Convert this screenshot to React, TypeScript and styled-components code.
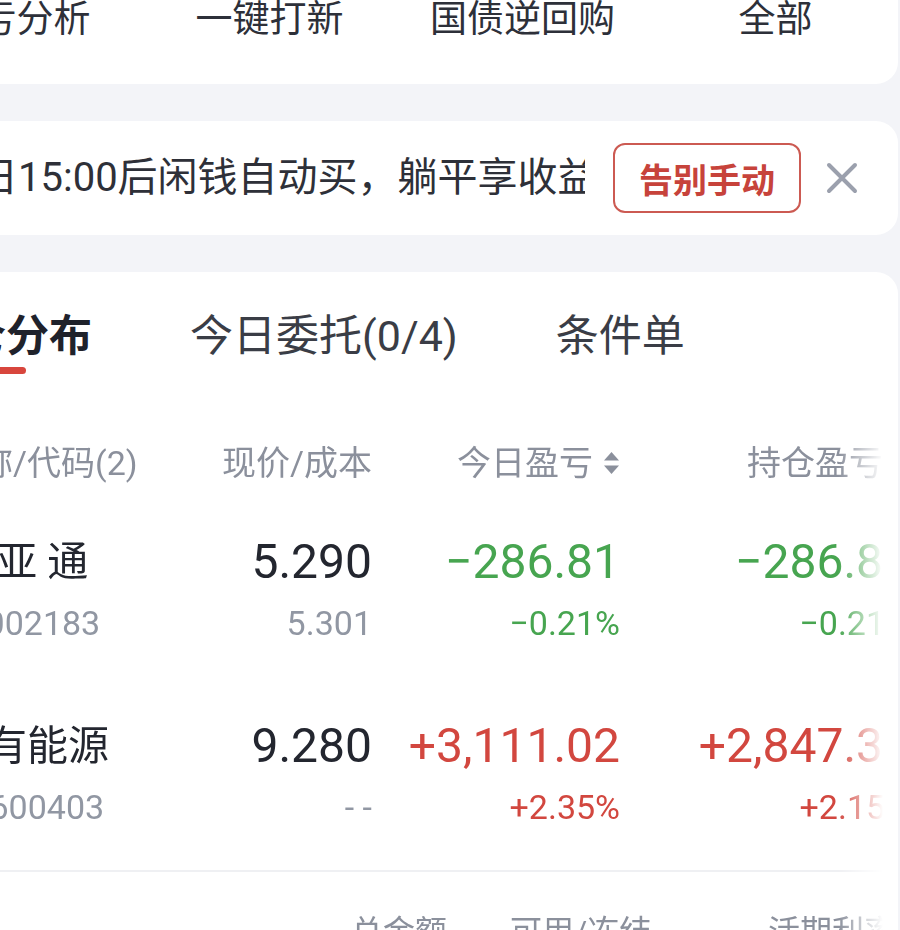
import React from 'react'
import styled, { createGlobalStyle } from 'styled-components'

const GREEN = '#47a550'
const RED = '#d2473f'
const TEXT = '#23262f'
const GREY = '#8b909c'

interface Holding {
  name: string
  code: string
  price: string
  cost: string
  today: string
  todayPct: string
  total: string
  totalPct: string
  up: boolean
}

const holdings: Holding[] = [
  {
    name: '怡 亚 通',
    code: 'SZ002183',
    price: '5.290',
    cost: '5.301',
    today: '−286.81',
    todayPct: '−0.21%',
    total: '−286.81',
    totalPct: '−0.21%',
    up: false,
  },
  {
    name: '大有能源',
    code: 'SH600403',
    price: '9.280',
    cost: '- -',
    today: '+3,111.02',
    todayPct: '+2.35%',
    total: '+2,847.36',
    totalPct: '+2.15%',
    up: true,
  },
]

const navItems = ['盈亏分析', '一键打新', '国债逆回购', '全部']
const tabs = ['持仓分布', '今日委托(0/4)', '条件单']

const GlobalStyle = createGlobalStyle`
  html, body {
    margin: 0;
    padding: 0;
    background: #f3f4f8;
    overflow: hidden;
  }
  body {
    font-family: Roboto, "Noto Sans CJK SC", sans-serif;
    color: ${TEXT};
  }
`

const SortIcon: React.FC = () => (
  <svg width='17' height='24' viewBox='0 0 17 24'>
    <path d='M8.5 1 L16 9.5 H1 Z' fill={GREY} />
    <path d='M8.5 23 L16 14.5 H1 Z' fill={GREY} />
  </svg>
)

const CloseIcon: React.FC = () => (
  <svg width='32' height='32' viewBox='0 0 32 32'>
    <path
      d='M3 3 L29 29 M29 3 L3 29'
      stroke='#9ba0ad'
      strokeWidth='4'
      strokeLinecap='round'
    />
  </svg>
)

const App: React.FC = () => {
  return (
    <>
      <GlobalStyle />
      <StyledPage>
        <StyledNavCard>
          {navItems.map((item) => (
            <StyledNavItem key={item}>{item}</StyledNavItem>
          ))}
        </StyledNavCard>

        <StyledBanner>
          <StyledBannerText>每日15:00后闲钱自动买，躺平享收益</StyledBannerText>
          <StyledBannerButton>告别手动</StyledBannerButton>
          <StyledClose>
            <CloseIcon />
          </StyledClose>
        </StyledBanner>

        <StyledHoldingCard>
          <StyledTabs>
            {tabs.map((tab, i) => (
              <StyledTab key={tab} isActive={i === 0}>
                {tab}
                {i === 0 && <StyledTabBar />}
              </StyledTab>
            ))}
          </StyledTabs>

          <StyledTableArea>
            <StyledTable>
              <StyledHeaderRow>
                <StyledHeaderCell align='left'>名称/代码(2)</StyledHeaderCell>
                <StyledHeaderCell align='right'>现价/成本</StyledHeaderCell>
                <StyledHeaderCell align='right'>
                  今日盈亏
                  <SortIcon />
                </StyledHeaderCell>
                <StyledHeaderCell align='right'>
                  持仓盈亏
                  <SortIcon />
                </StyledHeaderCell>
              </StyledHeaderRow>

              {holdings.map((h) => (
                <StyledRow key={h.code}>
                  <StyledCell align='left'>
                    <StyledName>{h.name}</StyledName>
                    <StyledSub>{h.code}</StyledSub>
                  </StyledCell>
                  <StyledCell align='right'>
                    <StyledValue>{h.price}</StyledValue>
                    <StyledSub>{h.cost}</StyledSub>
                  </StyledCell>
                  <StyledCell align='right'>
                    <StyledValue tone={h.up ? 'up' : 'down'}>
                      {h.today}
                    </StyledValue>
                    <StyledSub tone={h.up ? 'up' : 'down'}>
                      {h.todayPct}
                    </StyledSub>
                  </StyledCell>
                  <StyledCell align='right'>
                    <StyledValue tone={h.up ? 'up' : 'down'}>
                      {h.total}
                    </StyledValue>
                    <StyledSub tone={h.up ? 'up' : 'down'}>
                      {h.totalPct}
                    </StyledSub>
                  </StyledCell>
                </StyledRow>
              ))}
            </StyledTable>

            <StyledDivider />

            <StyledSummary>
              <StyledSummaryLabel>总金额</StyledSummaryLabel>
              <StyledSummaryLabel>可用/冻结</StyledSummaryLabel>
              <StyledSummaryLabel>活期利率</StyledSummaryLabel>
            </StyledSummary>
          </StyledTableArea>
        </StyledHoldingCard>
      </StyledPage>
    </>
  )
}

type Tone = 'up' | 'down' | 'plain'

const toneColor = (tone: Tone | undefined, fallback: string) =>
  tone === 'up' ? RED : tone === 'down' ? GREEN : fallback

const StyledPage = styled.div`
  margin-left: -160px;
  width: 1058px;
  display: flex;
  flex-direction: column;
  gap: 37px;
`

const StyledNavCard = styled.div`
  background: #fff;
  border-radius: 0 0 22px 22px;
  padding: 0 0 44px 50px;
  display: grid;
  grid-template-columns: repeat(4, 253px);
`

const StyledNavItem = styled.div`
  font-size: 37px;
  line-height: 40px;
  color: #2d3039;
  text-align: center;
  white-space: nowrap;
`

const StyledBanner = styled.div`
  background: #fff;
  border-radius: 22px;
  height: 114px;
  box-sizing: border-box;
  padding: 0 40px 0 98px;
  display: flex;
  align-items: center;
`

const StyledBannerText = styled.div`
  flex: 1;
  min-width: 0;
  overflow: hidden;
  white-space: nowrap;
  font-size: 40px;
  line-height: 50px;
  color: #2e3038;
  margin-right: 28px;
`

const StyledBannerButton = styled.div`
  width: 188px;
  height: 70px;
  box-sizing: border-box;
  border: 2px solid #cc5a52;
  border-radius: 12px;
  display: flex;
  align-items: center;
  justify-content: center;
  font-size: 34px;
  font-weight: 700;
  color: #c7433b;
  flex-shrink: 0;
`

const StyledClose = styled.div`
  margin-left: 25px;
  width: 32px;
  height: 32px;
  display: flex;
  flex-shrink: 0;
`

const StyledHoldingCard = styled.div`
  background: #fff;
  border-radius: 22px 22px 0 0;
  overflow: hidden;
  padding-bottom: 40px;
`

const StyledTabs = styled.div`
  display: flex;
  align-items: flex-start;
  gap: 98px;
  padding: 39px 0 0 80px;
`

const StyledTab = styled.div<{ isActive: boolean }>`
  display: flex;
  flex-direction: column;
  align-items: center;
  font-size: 43px;
  line-height: 50px;
  white-space: nowrap;
  font-weight: ${(props) => (props.isActive ? 700 : 400)};
  color: ${(props) => (props.isActive ? '#1f222b' : '#3a3d46')};
`

const StyledTabBar = styled.div`
  width: 40px;
  height: 7px;
  margin-top: 6px;
  border-radius: 4px;
  background: #d8463d;
`

const StyledTableArea = styled.div`
  margin-left: 105px;
  overflow: hidden;
  -webkit-mask-image: linear-gradient(
    to right,
    #000 calc(100% - 60px),
    transparent calc(100% - 15px)
  );
  mask-image: linear-gradient(
    to right,
    #000 calc(100% - 60px),
    transparent calc(100% - 15px)
  );
`

const StyledTable = styled.div`
  width: 965px;
`

const columns = '237px 190px 248px 290px'

const StyledHeaderRow = styled.div`
  display: grid;
  grid-template-columns: ${columns};
  margin-top: 69px;
  margin-bottom: 13px;
  height: 40px;
`

const StyledHeaderCell = styled.div<{ align: 'left' | 'right' }>`
  display: flex;
  align-items: center;
  justify-content: ${(props) =>
    props.align === 'left' ? 'flex-start' : 'flex-end'};
  gap: 10px;
  font-size: 34px;
  line-height: 40px;
  color: ${GREY};
  white-space: nowrap;
`

const StyledRow = styled.div`
  display: grid;
  grid-template-columns: ${columns};
  padding: 38px 0 37px;
`

const StyledCell = styled.div<{ align: 'left' | 'right' }>`
  display: flex;
  flex-direction: column;
  align-items: ${(props) =>
    props.align === 'left' ? 'flex-start' : 'flex-end'};
  gap: 13px;
  white-space: nowrap;
`

const StyledName = styled.div`
  font-size: 41px;
  line-height: 56px;
  color: ${TEXT};
`

const StyledValue = styled.div<{ tone?: Tone }>`
  font-size: 48px;
  line-height: 56px;
  color: ${(props) => toneColor(props.tone, TEXT)};
`

const StyledSub = styled.div<{ tone?: Tone }>`
  font-size: 34px;
  line-height: 40px;
  color: ${(props) => toneColor(props.tone, '#9197a3')};
`

const StyledDivider = styled.div`
  height: 2px;
  margin-top: 6px;
  background: #eff0f3;
`

const StyledSummary = styled.div`
  display: grid;
  grid-template-columns: 159px 258px auto;
  padding-left: 406px;
  margin-top: 40px;
`

const StyledSummaryLabel = styled.div`
  font-size: 32px;
  line-height: 40px;
  color: ${GREY};
  white-space: nowrap;
`

export default App
